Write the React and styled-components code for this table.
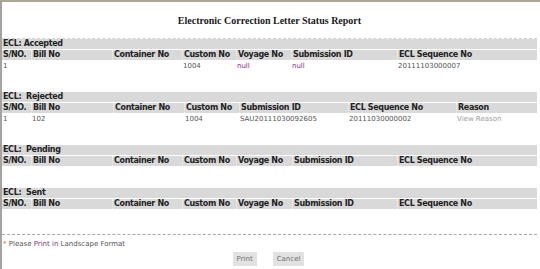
import React from 'react';
import styled, { createGlobalStyle } from 'styled-components';

const GlobalStyle = createGlobalStyle`
  html, body {
    margin: 0;
    padding: 0;
    background: #ffffff;
  }
  body {
    font-family: 'DejaVu Sans', Verdana, sans-serif;
    font-size: 8px;
  }
`;

const acceptedCols = '29px 81px 70px 54px 55px 106px 1fr';
const rejectedCols = '29px 82px 71px 55px 109px 108px 1fr';
const pendingCols = '29px 81px 70px 54px 56px 105px 1fr';

const sections = [
  {
    name: 'Accepted',
    label: 'ECL: Accepted',
    cols: acceptedCols,
    head: ['S/NO.', 'Bill No', 'Container No', 'Custom No', 'Voyage No', 'Submission ID', 'ECL Sequence No'],
    rows: [
      [
        { v: '1' },
        { v: '' },
        { v: '' },
        { v: '1004' },
        { v: 'null', link: true },
        { v: 'null', link: true },
        { v: '20111103000007' },
      ],
    ],
    after: 21,
  },
  {
    name: 'Rejected',
    label: 'ECL:  Rejected',
    cols: rejectedCols,
    head: ['S/NO.', 'Bill No', 'Container No', 'Custom No', 'Submission ID', 'ECL Sequence No', 'Reason'],
    rows: [
      [
        { v: '1' },
        { v: '102' },
        { v: '' },
        { v: '1004' },
        { v: 'SAU20111030092605' },
        { v: '20111030000002' },
        { v: 'View Reason', faint: true },
      ],
    ],
    after: 21,
  },
  {
    name: 'Pending',
    label: 'ECL:  Pending',
    cols: pendingCols,
    head: ['S/NO.', 'Bill No', 'Container No', 'Custom No', 'Voyage No', 'Submission ID', 'ECL Sequence No'],
    rows: [],
    after: 22,
  },
  {
    name: 'Sent',
    label: 'ECL:  Sent',
    cols: pendingCols,
    head: ['S/NO.', 'Bill No', 'Container No', 'Custom No', 'Voyage No', 'Submission ID', 'ECL Sequence No'],
    rows: [],
    after: 25,
  },
];

const App = () => {
  return (
    <>
      <GlobalStyle />
      <Frame>
        <Title>Electronic Correction Letter Status Report</Title>
        <Report>
          {sections.map((s) => (
            <Section key={s.name} after={s.after}>
              <Band>{s.label}</Band>
              <Row cols={s.cols}>
                {s.head.map((h) => (
                  <HeadCell key={h}>{h}</HeadCell>
                ))}
              </Row>
              {s.rows.map((r, idx) => (
                <Row key={idx} cols={s.cols}>
                  {r.map((c, i) => (
                    <DataCell key={i} link={c.link} faint={c.faint}>
                      {c.v}
                    </DataCell>
                  ))}
                </Row>
              ))}
            </Section>
          ))}
        </Report>
        <Footer>
          <Note>
            <Star>*</Star> Please <Hi>Print in</Hi> Landscape Format
          </Note>
          <Buttons>
            <Button>Print</Button>
            <Button>Cancel</Button>
          </Buttons>
        </Footer>
      </Frame>
    </>
  );
};

const Frame = styled.div`
  width: 540px;
  height: 269px;
  box-sizing: border-box;
  border-top: 2px solid #aaa894;
  border-left: 2px solid #a3a3a3;
  padding-right: 3px;
  overflow: hidden;
`;

const Title = styled.div`
  font-family: 'Liberation Serif', 'Times New Roman', serif;
  font-weight: 700;
  font-size: 10px;
  color: #1a1a1a;
  text-align: center;
  padding-top: 13px;
  height: 36px;
  box-sizing: border-box;
`;

const Report = styled.div`
  border-top: 1px dashed #d4d4d4;
  border-bottom: 1px dashed #a9a9a0;
`;

const Section = styled.div`
  display: flex;
  flex-direction: column;
  gap: 1px;
  margin-bottom: ${(p) => p.after}px;
`;

const Band = styled.div`
  background: #d9d9d9;
  height: 10px;
  line-height: 10px;
  padding-left: 1px;
  font-weight: 700;
  letter-spacing: -0.35px;
  color: #222;
  white-space: pre;
`;

const Row = styled.div`
  display: grid;
  grid-template-columns: ${(p) => p.cols};
  height: 10px;
`;

const HeadCell = styled.div`
  background: #d9d9d9;
  border-left: 1px dotted #f4f4f4;
  line-height: 10px;
  padding-left: 1px;
  font-weight: 700;
  letter-spacing: -0.35px;
  color: #222;
  white-space: nowrap;
  &:first-child {
    border-left: none;
  }
`;

const DataCell = styled.div`
  line-height: 10px;
  padding-left: 1px;
  font-size: 7px;
  color: ${(p) => (p.link ? '#8a2d8a' : p.faint ? '#9a9a9a' : '#555')};
  white-space: nowrap;
`;

const Footer = styled.div`
  padding-top: 5px;
`;

const Note = styled.div`
  font-size: 7px;
  color: #555;
  padding-left: 1px;
`;

const Star = styled.span`
  color: #e0622c;
`;

const Hi = styled.span`
  color: #7a3a8a;
`;

const Buttons = styled.div`
  display: flex;
  justify-content: center;
  gap: 16px;
  margin-top: 4px;
  padding-right: 2px;
`;

const Button = styled.button`
  font-family: 'DejaVu Sans', Verdana, sans-serif;
  font-size: 7px;
  color: #707070;
  background: #e2e2e2;
  border: none;
  height: 14px;
  padding: 0 4px;
`;

export default App;
